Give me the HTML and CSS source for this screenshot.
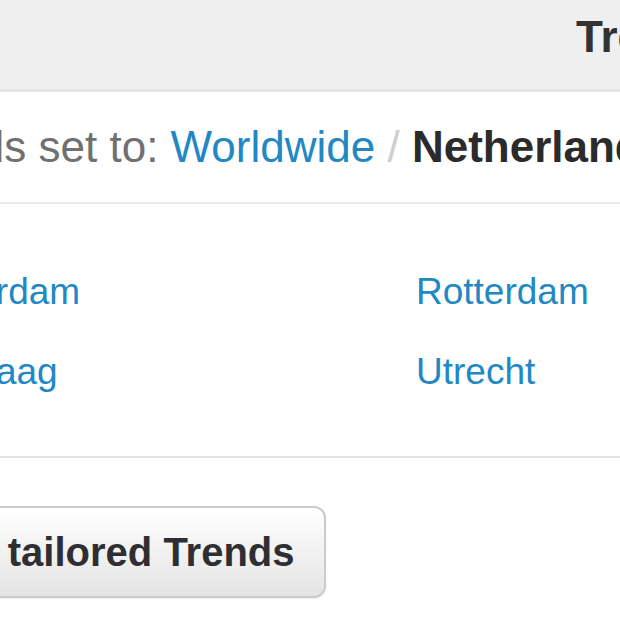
FILE: index.html
```html
<!DOCTYPE html>
<html>
<head>
<meta charset="utf-8">
<link rel="stylesheet" href="styles.css">
</head>
<body>
<div class="dialog">
  <div class="dialog-header">
    <h3 class="dialog-title">Trends</h3>
  </div>
  <div class="dialog-body">
    <div class="location">
      <p class="current">Trends set to: <a class="link" href="#">Worldwide</a> <span class="sep">/</span> <strong class="here">Netherlands</strong></p>
    </div>
    <ul class="cities">
      <li><a class="link" href="#">Amsterdam</a></li>
      <li><a class="link" href="#">Rotterdam</a></li>
      <li><a class="link" href="#">Den Haag</a></li>
      <li><a class="link" href="#">Utrecht</a></li>
    </ul>
    <div class="actions">
      <button class="btn">Get tailored Trends</button>
    </div>
  </div>
</div>
</body>
</html>
```

FILE: styles.css
```css
html, body {
  margin: 0;
  padding: 0;
  background: #ffffff;
  overflow: hidden;
}

body {
  width: 620px;
  height: 620px;
  font-family: "Liberation Sans", Arial, Helvetica, sans-serif;
}

.dialog {
  display: flex;
  flex-direction: column;
}

.dialog-header {
  height: 89px;
  background: #efefef;
  border-bottom: 3px solid #e4e4e4;
  padding-left: 576px;
  box-sizing: content-box;
}

.dialog-title {
  margin: 0;
  padding-top: 11px;
  font-size: 44px;
  line-height: 52px;
  font-weight: bold;
  color: #2f3336;
  white-space: nowrap;
}

.dialog-body {
  margin-left: -109px;
  display: flex;
  flex-direction: column;
}

.location {
  padding: 29px 0 29px;
  border-bottom: 2px solid #ececec;
}

.current {
  margin: 0;
  font-size: 44px;
  line-height: 52px;
  color: #707070;
  white-space: nowrap;
}

.link {
  color: #2288c4;
  text-decoration: none;
}

.sep {
  color: #cfcfcf;
}

.here {
  color: #2b2b2b;
  font-weight: bold;
}

.cities {
  list-style: none;
  margin: 0;
  padding: 66px 0 62px;
  display: grid;
  grid-template-columns: 525px 400px;
  row-gap: 36px;
  border-bottom: 2px solid #e2e2e2;
  font-size: 37px;
  line-height: 44px;
  white-space: nowrap;
}

.actions {
  padding-top: 48px;
  display: flex;
}

.btn {
  font-family: "Liberation Sans", Arial, Helvetica, sans-serif;
  font-size: 40px;
  line-height: 46px;
  font-weight: bold;
  color: #2f2f33;
  padding: 21px 29px 21px 37px;
  border: 2px solid #cbcbcb;
  border-radius: 12px;
  background: linear-gradient(#ffffff, #e4e4e4);
  box-shadow: 0 1px 2px rgba(0,0,0,0.08);
  white-space: nowrap;
}
```
